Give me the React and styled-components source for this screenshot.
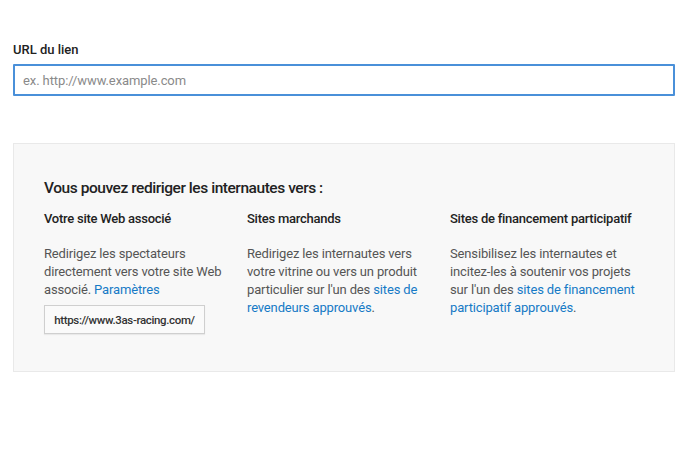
import styled, { createGlobalStyle } from "styled-components";

const GlobalStyle = createGlobalStyle`
  body {
    margin: 0;
    background: #ffffff;
    font-family: Roboto, "Liberation Sans", Arial, sans-serif;
  }
`;

const columns = [
  {
    title: "Votre site Web associé",
    text: "Redirigez les spectateurs directement vers votre site Web associé. ",
    link: "Paramètres",
    after: "",
    url: "https://www.3as-racing.com/",
  },
  {
    title: "Sites marchands",
    text: "Redirigez les internautes vers votre vitrine ou vers un produit particulier sur l'un des ",
    link: "sites de revendeurs approuvés",
    after: ".",
  },
  {
    title: "Sites de financement participatif",
    text: "Sensibilisez les internautes et incitez-les à soutenir vos projets sur l'un des ",
    link: "sites de financement participatif approuvés",
    after: ".",
  },
];

const App = () => {
  return (
    <Page>
      <GlobalStyle />
      <Label>URL du lien</Label>
      <UrlInput placeholder="ex. http://www.example.com" />
      <Panel>
        <Heading>Vous pouvez rediriger les internautes vers :</Heading>
        <Columns>
          {columns.map((col) => (
            <Column key={col.title}>
              <ColTitle>{col.title}</ColTitle>
              <ColText>
                {col.text}
                <Link href="#">{col.link}</Link>
                {col.after}
              </ColText>
              {col.url && <UrlBox>{col.url}</UrlBox>}
            </Column>
          ))}
        </Columns>
      </Panel>
    </Page>
  );
};

const Page = styled.div`
  width: 662px;
  padding: 42px 25px 0 13px;
`;

const Label = styled.div`
  font-size: 13px;
  font-weight: 500;
  color: #222;
  line-height: 16px;
`;

const UrlInput = styled.input`
  display: block;
  box-sizing: border-box;
  width: 662px;
  height: 32px;
  margin-top: 6px;
  padding: 0 8px;
  border: 2px solid #4a90d9;
  border-radius: 1px;
  font-family: Roboto, "Liberation Sans", Arial, sans-serif;
  font-size: 13px;
  letter-spacing: -0.1px;
  color: #333;
  outline: none;
  &::placeholder {
    color: #8a8a8a;
  }
`;

const Panel = styled.div`
  box-sizing: border-box;
  width: 662px;
  height: 229px;
  margin-top: 47px;
  padding: 34px 30px 0 30px;
  background: #f8f8f8;
  border: 1px solid #e9e9e9;
`;

const Heading = styled.div`
  font-size: 15.5px;
  font-weight: 500;
  letter-spacing: -0.45px;
  color: #222;
  line-height: 20px;
`;

const Columns = styled.div`
  display: grid;
  grid-template-columns: 203px 203px 1fr;
  margin-top: 13px;
`;

const Column = styled.div`
  padding-right: 10px;
  &:last-child {
    padding-right: 0;
  }
`;

const ColTitle = styled.div`
  font-size: 13px;
  font-weight: 500;
  letter-spacing: -0.25px;
  color: #222;
  line-height: 16px;
  white-space: nowrap;
`;

const ColText = styled.div`
  margin-top: 18px;
  font-size: 13px;
  letter-spacing: -0.15px;
  line-height: 18px;
  color: #555;
`;

const Link = styled.a`
  color: #167ac6;
  text-decoration: none;
`;

const UrlBox = styled.div`
  box-sizing: border-box;
  width: 161px;
  height: 29px;
  margin-top: 6px;
  display: flex;
  align-items: center;
  justify-content: center;
  background: #fafafa;
  border: 1px solid #cfcfcf;
  box-shadow: 0 1px 1px rgba(0, 0, 0, 0.06);
  font-size: 11.5px;
  font-weight: 500;
  letter-spacing: -0.35px;
  color: #333;
`;

export default App;
